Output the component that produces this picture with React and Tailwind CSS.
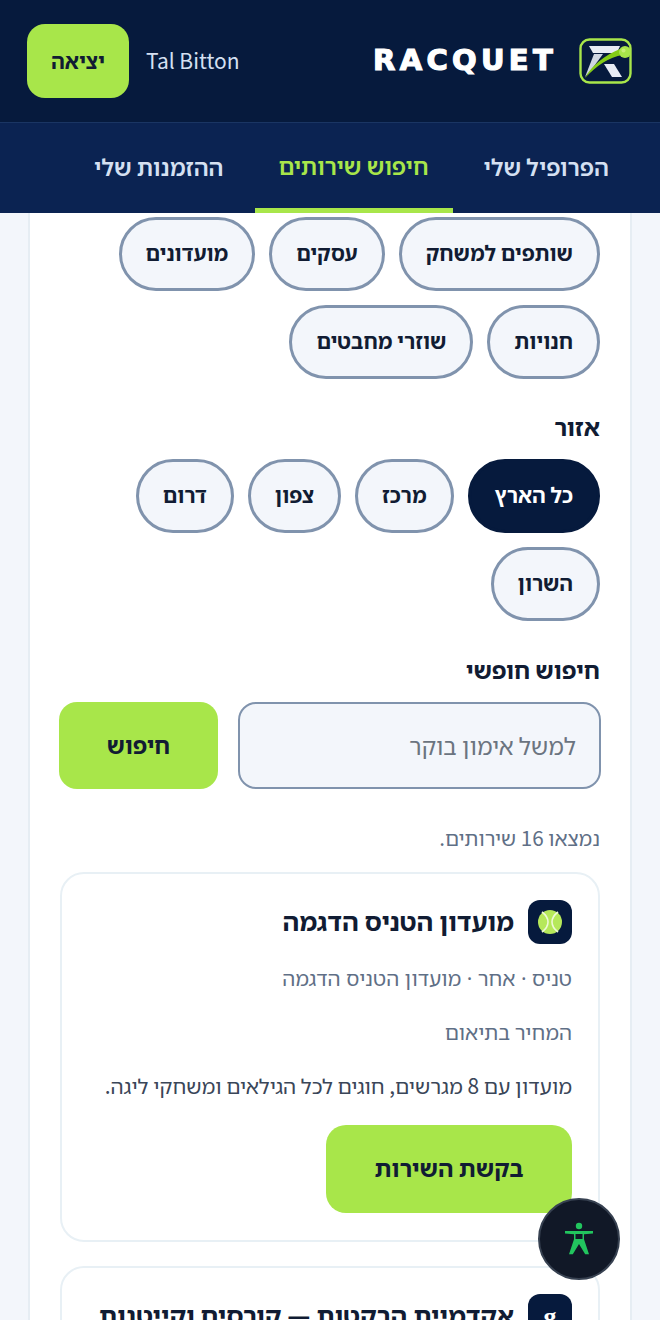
import React from "react";

const FONT = "font-['Noto_Sans_CJK_JP','Noto_Sans_Hebrew','Liberation_Sans',sans-serif]";

const Logo = () => (
  <svg width="54" height="46" viewBox="0 0 54 46">
    <rect x="1.500" y="1.500" width="50" height="43" rx="9" fill="#061a3d" stroke="#a8e64a" strokeWidth="2.400" />
    <path d="M10 8h31l-3 7H14z" fill="#e8ecf4" />
    <path d="M15 16h9L13 31l-7 8z" fill="#cfd6e2" />
    <path d="M25 26h10l8 13H33z" fill="#e8ecf4" />
    <path d="M6 40C13 27 26 17 41 11c3 0 4 3 3 6C30 19 17 28 6 40z" fill="#84cc16" />
    <circle cx="46" cy="14" r="6" fill="#a8e64a" />
    <circle cx="44.500" cy="12.500" r="2" fill="#c8f078" />
  </svg>
);

const BallIcon = () => (
  <svg width="26" height="26" viewBox="0 0 26 26">
    <circle cx="13" cy="13" r="12" fill="#b6e85a" />
    <path d="M5 3c8 6 8 14 0 20M21 3c-8 6-8 14 0 20" fill="none" stroke="#eef9d6" strokeWidth="1.600" />
  </svg>
);

const A11yIcon = () => (
  <svg width="30" height="34" viewBox="0 0 30 34" fill="#22c55e">
    <circle cx="15" cy="4" r="3.200" />
    <path d="M1 9h28v2.600l-9 .6v5l5 15h-3.800L15 22l-6.200 10.200H5L10 17.200v-5l-9-.6z" />
    <rect x="11.500" y="12" width="7" height="5" fill="#111827" />
  </svg>
);

const Pill = ({ label, active }) => (
  <button
    className={`h-[74px] px-[24px] pb-[3px] rounded-[37px] border-[3px] text-[20.800px] font-bold leading-none ${
      active ? "bg-[#061a3d] border-[#061a3d] text-white" : "bg-[#f3f6fb] border-[#8093ad] text-[#111c33]"
    }`}
  >
    {label}
  </button>
);

const ServiceCard = ({ icon, title, meta, price, desc, action }) => (
  <div className="rounded-[24px] border-2 border-[#e8f0f5] px-[26px] pt-[26px] pb-[27px]">
    <div className="flex items-center gap-3.5 h-11">
      <div className="w-11 h-11 rounded-xl bg-[#061a3d] flex items-center justify-center shrink-0">{icon}</div>
      <h3 className="pb-[3px] text-[25.500px] font-bold text-[#111c33] whitespace-nowrap">{title}</h3>
    </div>
    <p className="mt-[20px] text-[20.800px] leading-[28px] text-[#5f6f86] font-['Noto_Sans','Noto_Sans_Hebrew',sans-serif]">{meta}</p>
    <p className="mt-[25px] text-[20.800px] leading-[28px] text-[#5f6f86]">{price}</p>
    <p className="mt-[26px] text-[20.900px] leading-[28px] text-[#3a4658]">{desc}</p>
    <button className="mt-[26px] h-[88px] w-[246px] pb-[3px] rounded-[20px] bg-[#a8e64a] text-[23.500px] font-bold text-[#111c33]">
      {action}
    </button>
  </div>
);

export default function App() {
  return (
    <div dir="rtl" className={`relative h-[1320px] overflow-hidden bg-[#f3f6fb] ${FONT}`}>
      <header dir="ltr" className="h-[123px] bg-[#061a3d] border-b border-[#1a3563] flex items-center justify-between pl-[27px] pr-[27px]">
        <div className="flex items-center gap-[17px]">
          <button className="w-[102px] h-[74px] rounded-[18px] bg-[#a8e64a] text-[21px] font-bold text-[#111c33]">יציאה</button>
          <span className="text-[21px] text-[#d5e0f2]">Tal Bitton</span>
        </div>
        <div className="flex items-center gap-[22px]">
          <span className="text-[29px] font-bold tracking-[4.300px] text-white font-['DejaVu_Sans',sans-serif] [-webkit-text-stroke:1.200px_white]">RACQUET</span>
          <Logo />
        </div>
      </header>

      <nav className="h-[90px] bg-[#0b2352] flex gap-[7px] pr-[27px]">
        <a className="px-6 pb-1 flex items-center justify-center text-[23px] font-semibold text-[#d5e0f2]">הפרופיל שלי</a>
        <a className="px-6 flex items-center justify-center text-[23px] font-semibold text-[#a8e64a] border-b-[5px] border-[#a8e64a]">חיפוש שירותים</a>
        <a className="px-6 pb-1 flex items-center justify-center text-[23px] font-semibold text-[#d5e0f2]">ההזמנות שלי</a>
      </nav>

      <main className="mx-[28px] bg-white border-x-2 border-[#e6edf3] px-[30px] pt-1 h-full">
        <div className="flex flex-wrap gap-3.5">
          <Pill label="שותפים למשחק" />
          <Pill label="עסקים" />
          <Pill label="מועדונים" />
          <Pill label="חנויות" />
          <Pill label="שוזרי מחבטים" />
        </div>

        <h2 className="mt-[30px] text-[24px] leading-[34px] font-bold text-[#111c33]">אזור</h2>
        <div className="mt-[16px] flex flex-wrap gap-3.5">
          <Pill label="כל הארץ" active />
          <Pill label="מרכז" />
          <Pill label="צפון" />
          <Pill label="דרום" />
          <Pill label="השרון" />
        </div>

        <h2 className="mt-[31px] text-[23.500px] leading-[34px] font-bold text-[#111c33]">חיפוש חופשי</h2>
        <div className="mt-[16px] -mx-px flex gap-5">
          <input
            placeholder="למשל אימון בוקר"
            className="flex-1 min-w-0 h-[87px] rounded-[18px] border-2 border-[#8093ad] bg-[#f3f6fb] px-[23px] pb-[2px] text-[23.500px] placeholder:text-[#6b7480]"
          />
          <button className="w-[159px] h-[87px] pb-[2px] rounded-[18px] bg-[#a8e64a] text-[23px] font-bold text-[#111c33]">חיפוש</button>
        </div>

        <p className="mt-[34px] text-[20.600px] leading-[28px] text-[#5f6f86]">נמצאו 16 שירותים.</p>

        <div className="mt-[21px] flex flex-col gap-6">
          <ServiceCard
            icon={<BallIcon />}
            title="מועדון הטניס הדגמה"
            meta="טניס · אחר · מועדון הטניס הדגמה"
            price="המחיר בתיאום"
            desc="מועדון עם 8 מגרשים, חוגים לכל הגילאים ומשחקי ליגה."
            action="בקשת השירות"
          />
          <ServiceCard
            icon={<span className="text-[26px] font-bold text-white font-['Liberation_Serif',serif]">g</span>}
            title="אקדמיית הרקטות — קורסים וקייטנות"
            meta=""
            price=""
            desc=""
            action=""
          />
        </div>
      </main>

      <button className="absolute left-[538px] top-[1198px] w-[82px] h-[82px] rounded-full bg-[#111827] border-2 border-[#374151] flex items-center justify-center">
        <A11yIcon />
      </button>
    </div>
  );
}
